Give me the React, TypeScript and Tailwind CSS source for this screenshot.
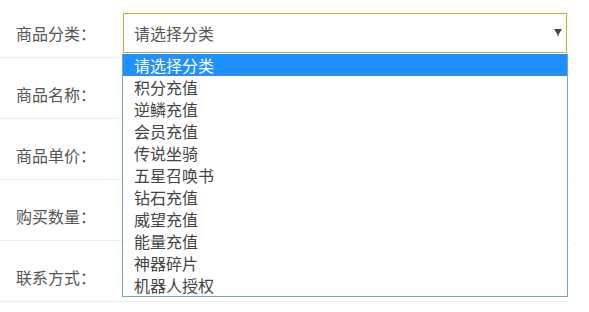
const options = [
  '请选择分类',
  '积分充值',
  '逆鳞充值',
  '会员充值',
  '传说坐骑',
  '五星召唤书',
  '钻石充值',
  '威望充值',
  '能量充值',
  '神器碎片',
  '机器人授权',
];

const labels = ['商品名称：', '商品单价：', '购买数量：', '联系方式：'];

const font = { fontFamily: '"Noto Sans CJK SC", "Noto Sans", sans-serif' };

export default function App() {
  return (
    <div className="w-[589px] h-[312px] bg-white overflow-hidden" style={font}>
      <div className="w-[570px]">
        {/* Category row with open select */}
        <div className="flex items-center pt-[13px] pb-[4px] border-b border-[#eeeeee]">
          <div className="w-[123px] pl-4 text-[16px] text-[#555555]">商品分类：</div>
          <div className="relative w-[444px]">
            <div className="flex items-center justify-between h-[40px] border border-[#e4a11b] pl-[10px] pr-[4px] text-[16px] text-[#555555]">
              <span>请选择分类</span>
              <svg width="8" height="7" viewBox="0 0 8 7" className="mt-[-1px]">
                <path d="M0 0H8L4.6 5.5V7H3.4V5.5Z" fill="#444" />
              </svg>
            </div>
            <ul className="absolute left-[-1px] top-[41px] w-[446px] border-x border-b border-[#7c9fd9] bg-white z-10">
              {options.map((o, i) => (
                <li
                  key={o}
                  className={
                    i === 0
                      ? 'h-[22px] leading-[22px] pl-[11px] text-[16px] bg-[#1e90ff] text-white'
                      : 'h-[22px] leading-[22px] pl-[11px] text-[16px] text-[#444444]'
                  }
                >
                  {o}
                </li>
              ))}
            </ul>
          </div>
        </div>
        {labels.map((l) => (
          <div key={l} className="flex items-center pt-4 pb-[4px] border-b border-[#eeeeee]">
            <div className="w-[123px] pl-4 text-[16px] text-[#555555]">{l}</div>
            <div className="w-[444px] h-[40px] border border-[#dddddd]" />
          </div>
        ))}
      </div>
    </div>
  );
}
